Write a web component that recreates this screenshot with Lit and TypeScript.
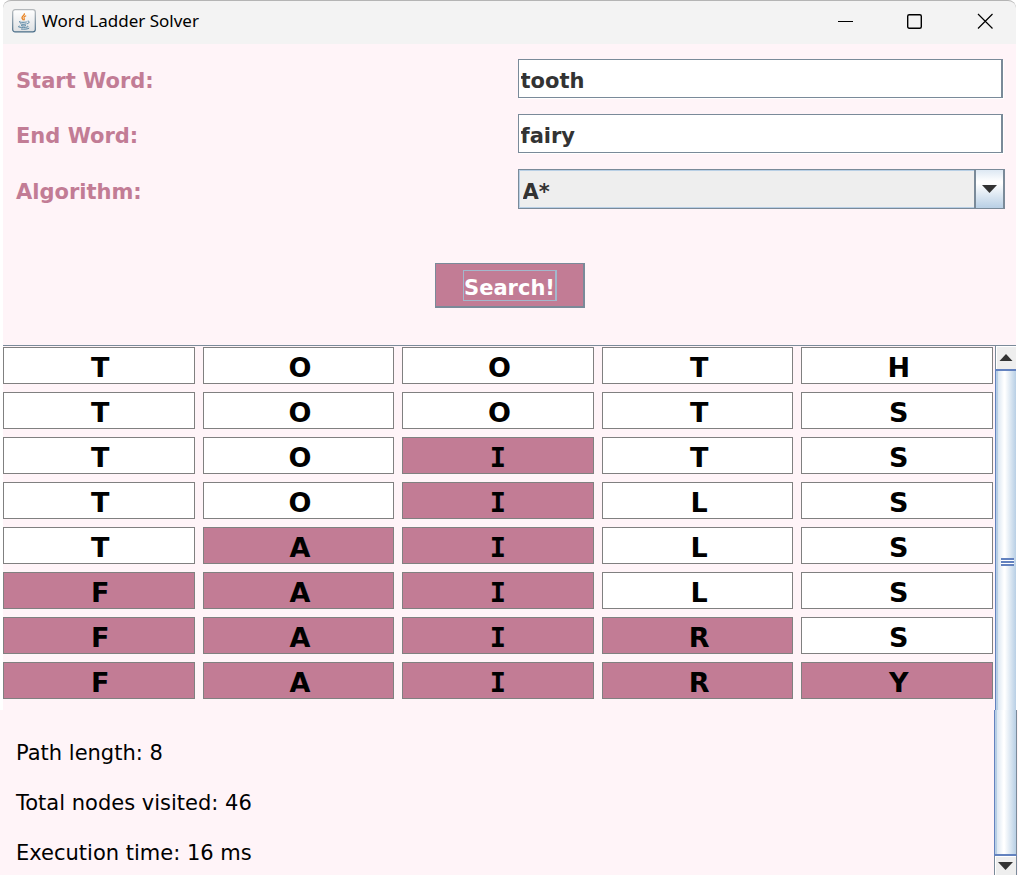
import { LitElement, html, css, svg } from "lit";
import { customElement, property, state } from "lit/decorators.js";
import { classMap } from "lit/directives/class-map.js";

@customElement("title-bar")
class TitleBar extends LitElement {
  @property() heading = "";

  static styles = css`
    :host { display: block; }
    header {
      display: flex;
      align-items: center;
      height: 44px;
      box-sizing: border-box;
      border-top: 1px solid #b4b4b4;
      border-radius: 8px 8px 0 0;
      background: #f3f3f3;
      padding: 0 8px 3px 9px;
      color: #000;
      font-family: "Noto Sans", sans-serif;
    }
    .logo { width: 24px; height: 24px; flex: none; }
    h1 { flex: 1; margin: 0 0 0 6px; font-size: 17px; line-height: 24px; font-weight: 400; }
    .controls { display: flex; gap: 24px; }
    button {
      width: 46px;
      height: 40px;
      padding: 0;
      border: 0;
      background: none;
      display: grid;
      place-items: center;
    }
    button svg { width: 16px; height: 16px; display: block; }
  `;

  render() {
    return html`<header>
      <svg class="logo" viewBox="0 0 24 24" aria-hidden="true">
        <defs>
          <linearGradient id="tile" x1="0" y1="0" x2="0" y2="1">
            <stop offset="0" stop-color="#ffffff" />
            <stop offset="1" stop-color="#dfe1e3" />
          </linearGradient>
          <linearGradient id="edge" x1="0" y1="0" x2="0" y2="1">
            <stop offset="0" stop-color="#b4b8bb" />
            <stop offset="1" stop-color="#496d88" />
          </linearGradient>
        </defs>
        <rect x="0.7" y="0.7" width="22.6" height="22.2" rx="2.4" fill="url(#tile)" stroke="url(#edge)" stroke-width="1.2" />
        <path d="M12.2 4.300c1.200 1.800-2.400 2.800-2.200 4.500.1 1 1.100 1.500 1.600 2.500" fill="none" stroke="#e98321" stroke-width="1.4" />
        <path d="M14.200 6.800c-2 .7-2.600 1.400-2.100 2.300.4.700.6 1.200-.1 2.200" fill="none" stroke="#e98321" stroke-width="1.100" />
        <path d="M8.200 12.300c-2 .6-1 1 2.800 1 1.800 0 3-.2 3.800-.4M8.300 14.600c.6.900 4.600.9 6.200.2M9 16.400c.8.700 3.600.7 4.900.1M15.600 12.200c2.300-.3 2 1.900-.5 2.600M7.600 17c-2.600.7-1 1.400 3.800 1.400 4 0 5.700-.8 4.100-1.400M9 20c3.500.4 7 .1 8.200-1" fill="none" stroke="#5382a1" stroke-width="1" />
      </svg>
      <h1>${this.heading}</h1>
      <div class="controls">
        <button aria-label="Minimize">
          <svg viewBox="0 0 16 16"><path d="M1 8.500h15" stroke="#000" /></svg>
        </button>
        <button aria-label="Maximize">
          <svg viewBox="0 0 16 16"><rect x="0.700" y="1.700" width="13.600" height="13.600" rx="1.500" fill="none" stroke="#000" stroke-width="1.400" /></svg>
        </button>
        <button aria-label="Close">
          <svg viewBox="0 0 16 16"><path d="M1 1l14.500 14.500M15.500 1L1 15.500" stroke="#000" stroke-width="1.200" /></svg>
        </button>
      </div>
    </header>`;
  }
}

@customElement("app-root")
class AppRoot extends LitElement {
  @state() private start = "tooth";
  @state() private end = "fairy";
  @state() private path = ["TOOTH", "TOOTS", "TOITS", "TOILS", "TAILS", "FAILS", "FAIRS", "FAIRY"];

  static styles = css`
    :host {
      display: flex;
      flex-direction: column;
      min-height: 100vh;
      background: #fff4f8;
      font-family: "DejaVu Sans", Verdana, sans-serif;
      color: #000;
    }
    .top { background: #fff; padding: 0 2px 0 3px; }
    .panel { background: #fff4f8; border-bottom: 1px solid #7a8a99; }
    form {
      display: grid;
      grid-template-columns: 1fr 1fr;
      column-gap: 16px;
      row-gap: 16px;
      padding: 15px 13px 37px;
      align-items: center;
      font-size: 21px;
      font-weight: 700;
    }
    label { color: #c27c95; line-height: 28px; padding-top: 5px; }
    input, select {
      box-sizing: border-box;
      width: 100%;
      height: 39px;
      margin: 0;
      border-radius: 0;
      outline: 0;
      font: inherit;
      color: #333;
      appearance: none;
    }
    input {
      display: block;
      background: #fff;
      border: 1px solid #7a8a99;
      border-right-width: 2px;
      padding: 5px 2px 0;
      box-shadow: 1px 1px #fff;
    }
    .combo { position: relative; margin-right: -2px; }
    select {
      display: block;
      height: 40px;
      background: #eee;
      border: 1px solid #7a8a99;
      border-right-width: 2px;
      box-shadow: inset 0 0 0 1px #b8cfe5;
      padding: 5px 32px 0 4px;
    }
    .drop {
      position: absolute;
      top: 1px;
      right: 2px;
      bottom: 1px;
      width: 27px;
      border-left: 2px solid #7a8a99;
      background: linear-gradient(#dde8f3, #fff 30%, #fff 35%, #b8cfe5);
      display: grid;
      place-items: center;
      pointer-events: none;
    }
    .drop svg { width: 15px; height: 8px; display: block; }
    .actions { grid-column: 1 / -1; display: flex; justify-content: center; padding-top: 38px; }
    .search {
      box-sizing: border-box;
      width: 150px;
      height: 45px;
      padding: 0 0 0 2px;
      border: 1px solid #7a8a99;
      border-right-width: 2px;
      border-bottom-width: 2px;
      background: #c27c95;
      color: #fff;
      font: inherit;
      display: grid;
      place-items: center;
    }
    .search span {
      border: 1px solid #a3b8cc;
      border-right-width: 2px;
      line-height: 24px;
      padding-top: 5px;
    }
    .results { display: flex; }
    .ladder {
      flex: 1;
      display: grid;
      gap: 8px;
      padding: 1px 2px 11px 0;
      background: #fff4f8;
    }
    .word { display: grid; grid-template-columns: repeat(5, 1fr); gap: 8px; }
    .cell {
      box-sizing: border-box;
      height: 37px;
      border: 1px solid #808080;
      background: #fff;
      padding: 2px 0 0 3px;
      line-height: 35px;
      text-align: center;
      font-size: 27px;
      font-weight: 700;
    }
    .cell.match { background: #c27c95; }
    .cell.barred { font-family: "DejaVu Sans Mono", monospace; padding-left: 0; }
    .bar { flex: none; display: flex; flex-direction: column; }
    .bar.upper { width: 21px; }
    .bar.lower { width: 23px; }
    .thumb {
      flex: 1;
      border-left: 1px solid #6382bf;
      background: linear-gradient(90deg, #b8cfe5 0 2px, #dce7f2 2px, #fff 40%, #fff 45%, #b8cfe5);
    }
    .upper .thumb { border-top: 2px solid #6382bf; padding: 187px 0 0 5px; }
    .lower .thumb { border-bottom: 2px solid #6382bf; border-right: 1px solid #7a8a99; }
    .grip {
      width: 13px;
      height: 8px;
      background: repeating-linear-gradient(#6382bf 0 2px, #fff 2px 3px);
    }
    .step {
      box-sizing: border-box;
      width: 100%;
      height: 23px;
      margin: 0;
      padding: 0;
      border: 0;
      border-left: 1px solid #7a8a99;
      border-radius: 0;
      background: #eee;
      box-shadow: inset 1px 1px #fff;
      display: grid;
      place-items: center;
    }
    .lower .step { height: 19px; border-right: 1px solid #7a8a99; }
    .step svg { display: block; width: 15px; height: 8px; }
    .bottom { flex: 1; display: flex; padding-right: 1px; }
    .stats {
      flex: 1;
      padding: 30px 16px 0;
      display: flex;
      flex-direction: column;
      gap: 24px;
      font-size: 21px;
      line-height: 26px;
    }
    .stats p { margin: 0; }
  `;

  private arrow(up: boolean) {
    return html`<svg viewBox="0 0 15 8" aria-hidden="true">
      ${up
        ? svg`<path d="M7 0L13.500 7H0.500z" fill="#333" />`
        : svg`<path d="M0 0h15L7.500 8z" fill="#333" />`}
    </svg>`;
  }

  render() {
    const target = this.end.toUpperCase();
    return html`
      <div class="top">
        <title-bar heading="Word Ladder Solver"></title-bar>
        <div class="panel">
          <form @submit=${(e: Event) => e.preventDefault()}>
            <label for="start">Start Word:</label>
            <input id="start" type="text" .value=${this.start} />
            <label for="end">End Word:</label>
            <input id="end" type="text" .value=${this.end} />
            <label for="algorithm">Algorithm:</label>
            <div class="combo">
              <select id="algorithm">
                <option>A*</option>
              </select>
              <span class="drop">${this.arrow(false)}</span>
            </div>
            <div class="actions">
              <button class="search" type="submit"><span>Search!</span></button>
            </div>
          </form>
        </div>
        <div class="results">
          <div class="ladder">
            ${this.path.map(
              (word) => html`<div class="word">
                ${[...word].map(
                  (ch, i) =>
                    html`<div class=${classMap({ cell: true, match: ch === target[i], barred: ch === "I" })}>${ch}</div>`
                )}
              </div>`
            )}
          </div>
          <div class="bar upper">
            <button class="step" aria-label="Scroll up">${this.arrow(true)}</button>
            <div class="thumb"><div class="grip"></div></div>
          </div>
        </div>
      </div>
      <div class="bottom">
        <div class="stats">
          <p>Path length: ${this.path.length}</p>
          <p>Total nodes visited: 46</p>
          <p>Execution time: 16 ms</p>
        </div>
        <div class="bar lower">
          <div class="thumb"></div>
          <button class="step" aria-label="Scroll down">${this.arrow(false)}</button>
        </div>
      </div>
    `;
  }
}
